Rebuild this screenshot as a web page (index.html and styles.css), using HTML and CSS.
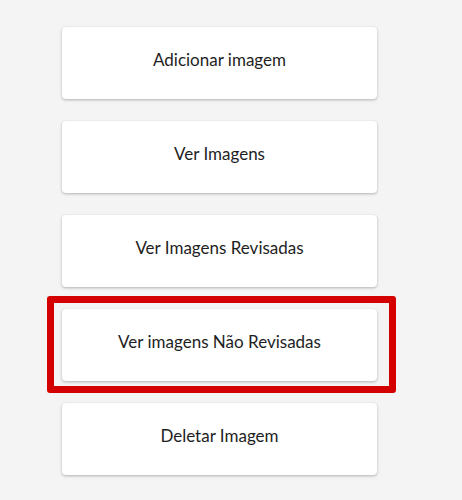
FILE: index.html
```html
<!DOCTYPE html>
<html lang="pt">
<head>
<meta charset="utf-8">
<link rel="stylesheet" href="styles.css">
</head>
<body>
<div class="menu">
  <button class="card">Adicionar imagem</button>
  <button class="card">Ver Imagens</button>
  <button class="card">Ver Imagens Revisadas</button>
  <button class="card highlighted">Ver imagens Não Revisadas<span class="mark"></span></button>
  <button class="card">Deletar Imagem</button>
</div>
</body>
</html>
```
FILE: styles.css
```css
html, body {
  margin: 0;
  padding: 0;
  background: #f4f4f4;
}
body {
  width: 462px;
  height: 500px;
  overflow: hidden;
  font-family: Lato, "Open Sans", sans-serif;
}
.menu {
  display: flex;
  flex-direction: column;
  gap: 22px;
  padding: 27px 0 0 62px;
}
.card {
  position: relative;
  width: 315px;
  height: 72px;
  margin: 0;
  padding: 0 0 8px;
  border: none;
  border-radius: 4px;
  background: #ffffff;
  box-shadow: 0 1px 3px rgba(0, 0, 0, 0.28);
  color: #1e1e1e;
  font-family: inherit;
  font-size: 17px;
  text-align: center;
  cursor: pointer;
}
.mark {
  position: absolute;
  top: -13px;
  left: -15px;
  right: -19px;
  bottom: -12px;
  border: 7px solid #d40000;
  border-radius: 3px;
  pointer-events: none;
}
```
